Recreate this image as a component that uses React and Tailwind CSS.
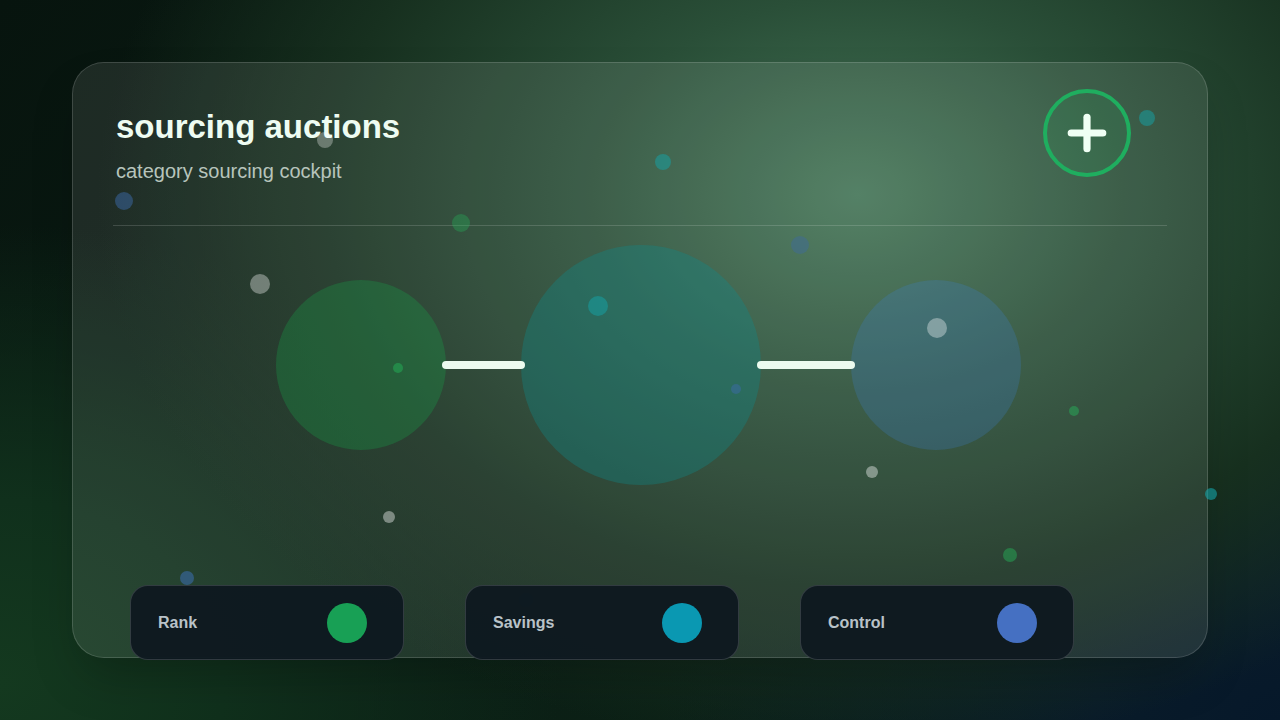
import { Plus } from 'lucide-react';

const particles = [
  { x: 325, y: 140, d: 16, c: 'bg-white/30' },
  { x: 124, y: 201, d: 18, c: 'bg-[#3b6aa8]/50' },
  { x: 663, y: 162, d: 16, c: 'bg-[#14a3a8]/50' },
  { x: 461, y: 223, d: 18, c: 'bg-[#22c55e]/30' },
  { x: 800, y: 245, d: 18, c: 'bg-[#3b6aa8]/40' },
  { x: 260, y: 284, d: 20, c: 'bg-white/35' },
  { x: 598, y: 306, d: 20, c: 'bg-[#14a3a8]/50' },
  { x: 937, y: 328, d: 20, c: 'bg-white/35' },
  { x: 398, y: 368, d: 10, c: 'bg-[#22c55e]/40' },
  { x: 736, y: 389, d: 10, c: 'bg-[#3b6aa8]/50' },
  { x: 1147, y: 118, d: 16, c: 'bg-[#14a3a8]/50' },
  { x: 1074, y: 411, d: 10, c: 'bg-[#22c55e]/40' },
  { x: 872, y: 472, d: 12, c: 'bg-white/40' },
  { x: 389, y: 517, d: 12, c: 'bg-white/40' },
  { x: 1211, y: 494, d: 12, c: 'bg-[#14a3a8]/60' },
  { x: 1010, y: 555, d: 14, c: 'bg-[#22c55e]/40' },
  { x: 187, y: 578, d: 14, c: 'bg-[#3b6aa8]/60' },
  { x: 526, y: 600, d: 14, c: 'bg-[#1f3a4a]/80' },
];

const stats = [
  { label: 'Rank', dot: 'bg-[#18a055]' },
  { label: 'Savings', dot: 'bg-[#0a98b2]' },
  { label: 'Control', dot: 'bg-[#4570c2]' },
];

export default function App() {
  return (
    <div className="relative w-full h-[720px] overflow-hidden font-['Liberation_Sans',Arial,sans-serif] bg-[radial-gradient(ellipse_760px_560px_at_67%_27%,#447557_0%,#2a4f38_35%,#17301f_70%,transparent_100%),radial-gradient(ellipse_620px_460px_at_100%_100%,#06182a_0%,#0a1c2a_30%,transparent_100%),radial-gradient(ellipse_560px_460px_at_0%_95%,#14391f_0%,#10301c_40%,transparent_100%),linear-gradient(135deg,#07140e_0%,#0b1e15_50%,#0e2619_100%)] flex items-center justify-center">
      {/* glass panel */}
      <div className="relative w-[1136px] h-[596px] rounded-[32px] border border-white/15 bg-white/[0.09] shadow-2xl flex flex-col">
        {/* header */}
        <div className="flex items-start justify-between pl-[43px] pr-[76px] pt-[26px]">
          <div className="pt-[18px]">
            <h1 className="text-[33px] leading-[40px] font-bold text-[#eefcf2]">sourcing auctions</h1>
            <p className="mt-[10px] text-[20px] leading-[28px] text-[#b7c4bc]">category sourcing cockpit</p>
          </div>
          <button className="w-[88px] h-[88px] rounded-full border-4 border-[#1fae5f] bg-[#22c55e]/10 flex items-center justify-center text-[#f0fff4]">
            <Plus className="w-[54px] h-[54px]" strokeWidth={3.2} />
          </button>
        </div>

        <div className="mx-10 mt-[40px] h-px bg-white/15" />

        {/* flow */}
        <div className="flex items-center pl-[203px] mt-[19px]">
          <div className="w-[170px] h-[170px] rounded-full bg-[#16a34a]/30" />
          <div className="relative w-[83px] h-2 -ml-1 rounded-full bg-[#ecfbef]" />
          <div className="w-[240px] h-[240px] -ml-1 rounded-full bg-[#0e8a8a]/35" />
          <div className="relative w-[98px] h-2 -ml-1 rounded-full bg-[#ecfbef]" />
          <div className="w-[170px] h-[170px] -ml-1 rounded-full bg-[#3b7fd0]/25" />
        </div>

        {/* stat cards */}
        <div className="relative z-10 mt-auto -mb-[3px] flex gap-[61px] pl-[57px]">
          {stats.map((s) => (
            <div
              key={s.label}
              className="w-[274px] h-[75px] rounded-[18px] border border-white/15 bg-[#0e1820]/95 flex items-center justify-between pl-[27px] pr-9"
            >
              <span className="text-[16px] font-bold text-[#b9c2c8]">{s.label}</span>
              <span className={`w-10 h-10 rounded-full ${s.dot}`} />
            </div>
          ))}
        </div>
      </div>

      {/* floating particles */}
      <div className="pointer-events-none absolute inset-0">
        {particles.map((p, i) => (
          <span
            key={i}
            className={`absolute rounded-full blur-[0.5px] ${p.c}`}
            style={{ left: p.x - p.d / 2, top: p.y - p.d / 2, width: p.d, height: p.d }}
          />
        ))}
      </div>
    </div>
  );
}
